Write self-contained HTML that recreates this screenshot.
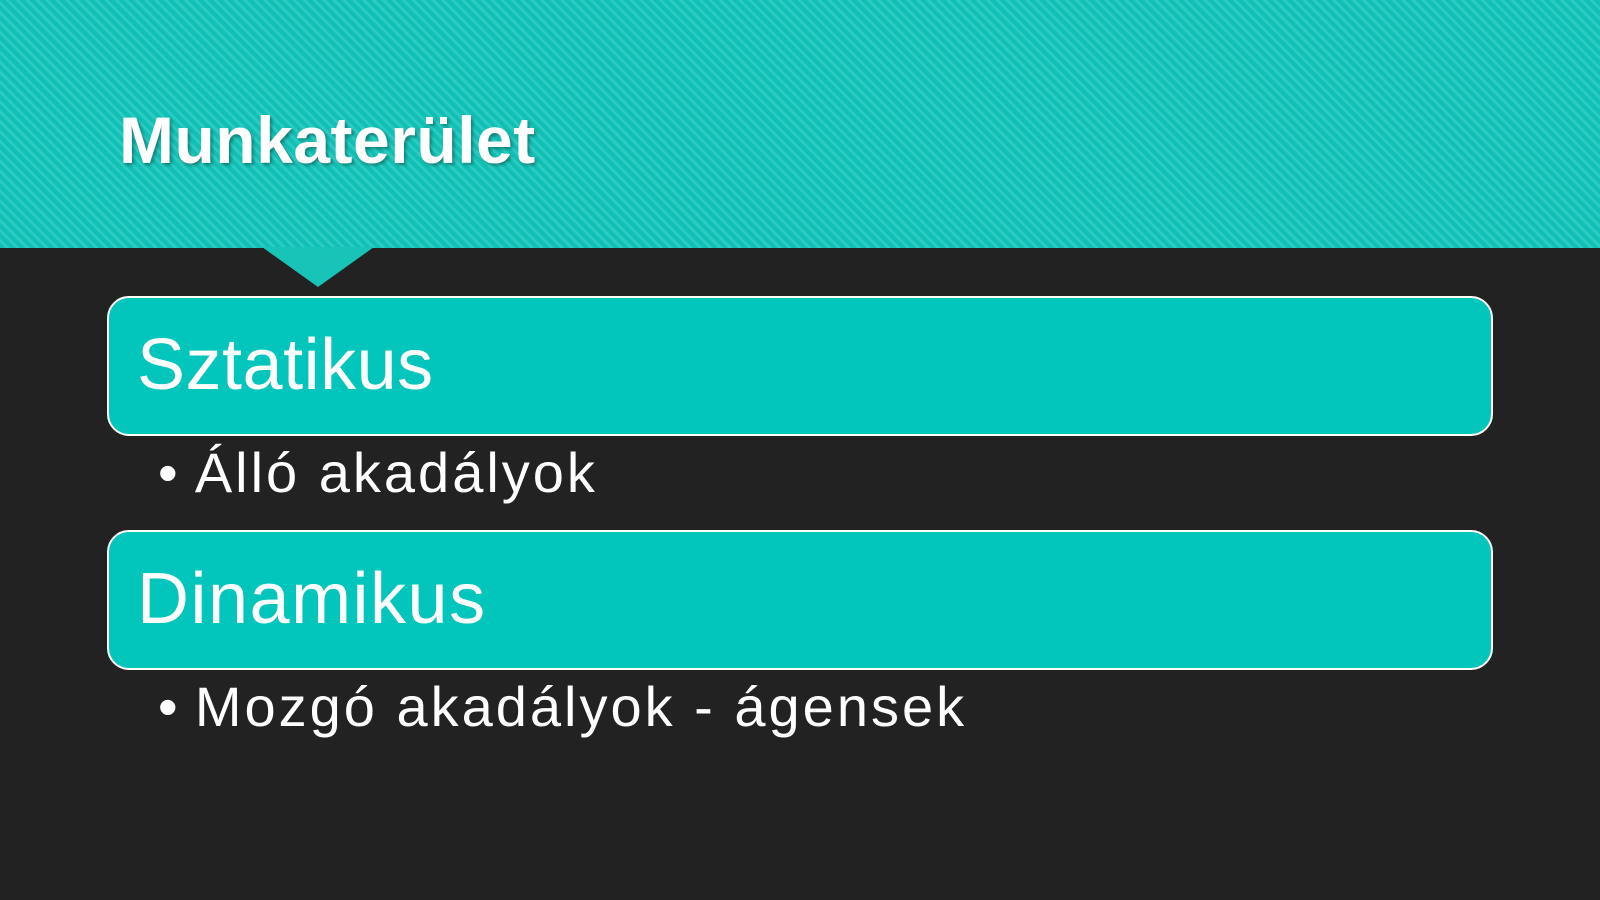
<!DOCTYPE html>
<html><head><meta charset="utf-8"><style>
html,body{margin:0;padding:0}
body{width:1600px;height:900px;overflow:hidden;background:#222222;position:relative;font-family:"Liberation Sans","DejaVu Sans",sans-serif;color:#fff}
.band{position:absolute;left:0;top:0;width:1600px;height:248px;background:repeating-linear-gradient(45deg,#10c0b4 0 4px,#2ccbc1 4px 7px)}
.tri{position:absolute;left:262px;top:247px;width:0;height:0;border-left:56px solid transparent;border-right:56px solid transparent;border-top:40px solid #18c3b8}
h1{position:absolute;left:119px;top:102px;margin:0;font-size:66px;font-weight:bold;letter-spacing:0.5px;text-shadow:2px 2px 3px rgba(0,0,0,.35)}
.box{position:absolute;left:107px;width:1386px;height:140px;background:#02c5bc;border:2px solid #fff;border-radius:22px;box-sizing:border-box}
.box span{position:absolute;left:28px;top:26px;font-size:72px;letter-spacing:0.5px}
.b{position:absolute;left:158px;font-size:56px;letter-spacing:3px}
</style></head><body>
<div class="band"></div>
<div class="tri"></div>
<h1>Munkaterület</h1>
<div class="box" style="top:296px"><span>Sztatikus</span></div>
<div class="b" style="top:440px">•&thinsp;Álló akadályok</div>
<div class="box" style="top:530px"><span style="letter-spacing:1.5px">Dinamikus</span></div>
<div class="b" style="top:674px">•&thinsp;Mozgó akadályok - ágensek</div>
</body></html>
